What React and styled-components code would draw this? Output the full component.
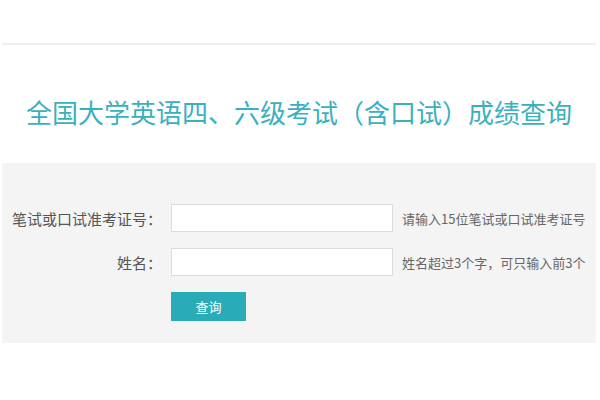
import React from 'react';
import styled, { createGlobalStyle } from 'styled-components';

const GlobalStyle = createGlobalStyle`
    body {
        margin: 0;
        background: #fff;
        overflow: hidden;
        font-family: "Liberation Sans", "Noto Sans CJK SC", sans-serif;
    }
`

const Page = styled.div`
    width: 600px;
    padding: 0 4px 0 2px;
    box-sizing: border-box;
`

const TopRule = styled.div`
    margin-top: 43px;
    height: 2px;
    background: #efefef;
`

const Title = styled.h1`
    margin: 0;
    padding-top: 50px;
    height: 118px;
    box-sizing: border-box;
    text-align: center;
    font-size: 26px;
    font-weight: 400;
    line-height: 34px;
    color: #3bb0bd;
    font-family: "Noto Sans CJK SC", sans-serif;
`

const Panel = styled.div`
    background: #f4f4f4;
    height: 180px;
    padding-top: 41px;
    box-sizing: border-box;
    display: flex;
    flex-direction: column;
    gap: 16px;
`

const Row = styled.div`
    display: grid;
    grid-template-columns: 160px 222px 1fr;
    column-gap: 9px;
    align-items: center;
    height: 28px;
`

const Label = styled.label`
    text-align: right;
    font-size: 15px;
    color: #555;
    font-family: "Noto Sans CJK SC", sans-serif;
    white-space: nowrap;
`

const Input = styled.input`
    width: 222px;
    height: 28px;
    box-sizing: border-box;
    border: 1px solid #dcdcdc;
    background: #fff;
    outline: none;
`

const Hint = styled.span`
    font-size: 13px;
    color: #666;
    white-space: nowrap;
    font-family: "Noto Sans CJK SC", sans-serif;
`

const Button = styled.button`
    grid-column: 2;
    justify-self: start;
    width: 75px;
    height: 29px;
    border: none;
    background: #2aabb8;
    color: #fff;
    font-size: 13px;
    font-family: "Noto Sans CJK SC", sans-serif;
    cursor: pointer;
`

function App() {
    return (
        <Page>
            <GlobalStyle />
            <TopRule />
            <Title>全国大学英语四、六级考试（含口试）成绩查询</Title>
            <Panel>
                <Row>
                    <Label>笔试或口试准考证号：</Label>
                    <Input type="text" />
                    <Hint>请输入15位笔试或口试准考证号</Hint>
                </Row>
                <Row>
                    <Label>姓名：</Label>
                    <Input type="text" />
                    <Hint>姓名超过3个字，可只输入前3个</Hint>
                </Row>
                <Row>
                    <Button>查询</Button>
                </Row>
            </Panel>
        </Page>
    );
}

export default App;
